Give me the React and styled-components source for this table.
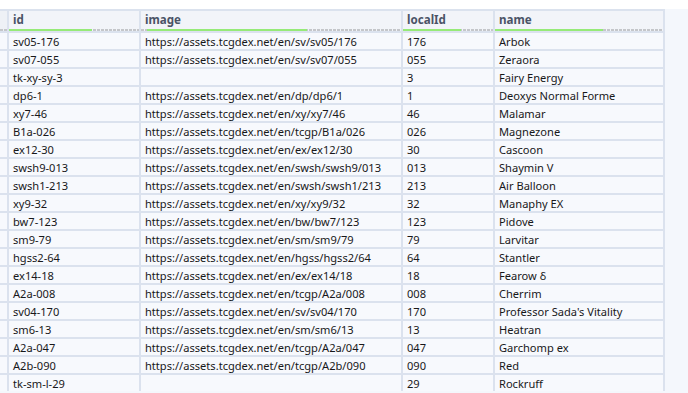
import React from 'react';
import styled, { createGlobalStyle } from 'styled-components';

//----DATA----//

const columns = [
  { key: 'id', label: 'id', fill: 83, offset: 0 },
  { key: 'image', label: 'image', fill: 160, offset: 6 },
  { key: 'localId', label: 'localId', fill: 58, offset: 0 },
  { key: 'name', label: 'name', fill: 108, offset: 0 },
];

const rows = [
  ['sv05-176', 'https://assets.tcgdex.net/en/sv/sv05/176', '176', 'Arbok'],
  ['sv07-055', 'https://assets.tcgdex.net/en/sv/sv07/055', '055', 'Zeraora'],
  ['tk-xy-sy-3', '', '3', 'Fairy Energy'],
  ['dp6-1', 'https://assets.tcgdex.net/en/dp/dp6/1', '1', 'Deoxys Normal Forme'],
  ['xy7-46', 'https://assets.tcgdex.net/en/xy/xy7/46', '46', 'Malamar'],
  ['B1a-026', 'https://assets.tcgdex.net/en/tcgp/B1a/026', '026', 'Magnezone'],
  ['ex12-30', 'https://assets.tcgdex.net/en/ex/ex12/30', '30', 'Cascoon'],
  ['swsh9-013', 'https://assets.tcgdex.net/en/swsh/swsh9/013', '013', 'Shaymin V'],
  ['swsh1-213', 'https://assets.tcgdex.net/en/swsh/swsh1/213', '213', 'Air Balloon'],
  ['xy9-32', 'https://assets.tcgdex.net/en/xy/xy9/32', '32', 'Manaphy EX'],
  ['bw7-123', 'https://assets.tcgdex.net/en/bw/bw7/123', '123', 'Pidove'],
  ['sm9-79', 'https://assets.tcgdex.net/en/sm/sm9/79', '79', 'Larvitar'],
  ['hgss2-64', 'https://assets.tcgdex.net/en/hgss/hgss2/64', '64', 'Stantler'],
  ['ex14-18', 'https://assets.tcgdex.net/en/ex/ex14/18', '18', 'Fearow δ'],
  ['A2a-008', 'https://assets.tcgdex.net/en/tcgp/A2a/008', '008', 'Cherrim'],
  ['sv04-170', 'https://assets.tcgdex.net/en/sv/sv04/170', '170', "Professor Sada's Vitality"],
  ['sm6-13', 'https://assets.tcgdex.net/en/sm/sm6/13', '13', 'Heatran'],
  ['A2a-047', 'https://assets.tcgdex.net/en/tcgp/A2a/047', '047', 'Garchomp ex'],
  ['A2b-090', 'https://assets.tcgdex.net/en/tcgp/A2b/090', '090', 'Red'],
  ['tk-sm-l-29', '', '29', 'Rockruff'],
];

//----STYLING----//

const Global = createGlobalStyle`
  html, body { margin: 0; padding: 0; background: #ffffff; }
  body { font-family: "Noto Sans", "Open Sans", sans-serif; overflow: hidden; }
`;

const Page = styled.div`
  width: 688px;
  height: 393px;
  padding-top: 9px;
  box-sizing: border-box;
  overflow: hidden;
`;

const Area = styled.div`
  background: #f4f7fc;
  height: 100%;
`;

const Grid = styled.div`
  display: grid;
  grid-template-columns: 7px 130px 260px 90px 168px;
  grid-template-rows: 20px;
  grid-auto-rows: 16px;
  gap: 2px;
  width: 665px;
  box-sizing: border-box;
  padding: 2px 2px 0 0;
  background: #dbe2ee;
`;

const HeadCell = styled.div`
  position: relative;
  background: #f2f4f9;
  color: #4a5366;
  font-weight: 700;
  font-size: 11.6px;
  line-height: 18px;
  padding-left: 4px;
  white-space: nowrap;
`;

const Stub = styled.div`
  position: relative;
  background: ${p => (p.$head ? '#eef1f6' : '#f7f9fd')};
`;

const Meter = styled.div`
  position: absolute;
  left: 0;
  right: 0;
  bottom: 0;
  height: 2px;
  background: repeating-linear-gradient(90deg, #c4c6ca 0 3px, transparent 3px 4px);
`;

const Fill = styled.div`
  position: absolute;
  top: 0;
  bottom: 0;
  left: ${p => p.$offset}px;
  width: ${p => p.$fill}px;
  background: #96ea78;
`;

const Cell = styled.div`
  background: #f7f9fd;
  color: #18181a;
  font-size: 11.1px;
  line-height: 17px;
  padding-left: 4px;
  white-space: nowrap;
  overflow: hidden;
`;

//----COMPONENT----//

const App = () => {
  return (
    <>
      <Global />
      <Page>
        <Area>
          <Grid>
            <Stub $head>
              <Meter />
            </Stub>
            {columns.map(c => (
              <HeadCell key={c.key}>
                {c.label}
                <Meter>
                  <Fill $fill={c.fill} $offset={c.offset} />
                </Meter>
              </HeadCell>
            ))}
            {rows.map((r, i) => (
              <React.Fragment key={i}>
                <Stub />
                {r.map((v, j) => (
                  <Cell key={j}>{v}</Cell>
                ))}
              </React.Fragment>
            ))}
          </Grid>
        </Area>
      </Page>
    </>
  );
};

export default App;
